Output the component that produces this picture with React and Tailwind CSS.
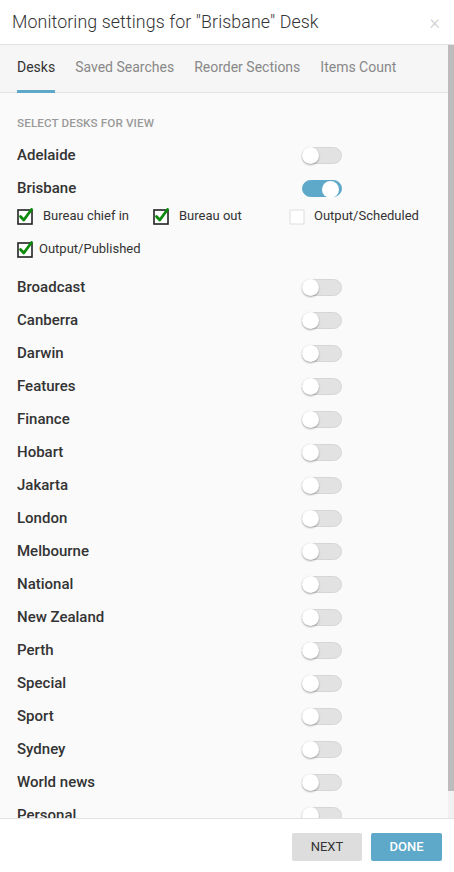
import { useState } from 'react';

const desks = [
  'Broadcast', 'Canberra', 'Darwin', 'Features', 'Finance', 'Hobart', 'Jakarta',
  'London', 'Melbourne', 'National', 'New Zealand', 'Perth', 'Special', 'Sport',
  'Sydney', 'World news', 'Personal'
];

const Toggle = ({ on }) => (
  <div
    className={`relative w-[40px] h-[17px] rounded-full border ${
      on ? 'bg-[#5ea9c9] border-[#5ea9c9]' : 'bg-[#e2e2e2] border-[#d6d6d6]'
    }`}
  >
    <div
      className={`absolute top-[-1px] w-[17px] h-[17px] rounded-full bg-white shadow-[0_1px_2px_rgba(0,0,0,0.35)] ${
        on ? 'right-[2px] top-[0px] w-[15px] h-[15px] shadow-none' : 'left-[-1px]'
      }`}
    />
  </div>
);

const Check = ({ checked }) => (
  <svg width="18" height="18" viewBox="0 0 18 18" className="shrink-0">
    <rect x="1" y="3" width="14" height="14" fill="white" stroke={checked ? '#222' : '#ddd'} strokeWidth={checked ? 1.6 : 1} />
    {checked && (
      <path d="M3.5 9.5 L6.8 13 L14.5 2.5" fill="none" stroke="#0b8a0b" strokeWidth="2.8" strokeLinecap="round" strokeLinejoin="round" />
    )}
  </svg>
);

const App = () => {
  const [tab] = useState('Desks');
  const tabs = ['Desks', 'Saved Searches', 'Reorder Sections', 'Items Count'];

  return (
    <div className="w-[454px] h-[872px] bg-white flex flex-col overflow-hidden" style={{ fontFamily: 'Roboto, "Liberation Sans", sans-serif' }}>
      <div className="h-[45px] shrink-0 flex items-center justify-between pl-[12px] pr-[14px] border-b border-[#e2e2e2]">
        <h1 className="text-[17.8px] font-light text-[#333] tracking-[0.1px]">Monitoring settings for "Brisbane" Desk</h1>
        <span className="text-[#cfcfcf] text-[20px] leading-none font-light">×</span>
      </div>

      <div className="flex flex-1 min-h-0">
        <div className="flex-1 flex flex-col overflow-hidden bg-[#fafafa]">
          <div className="h-[48px] shrink-0 bg-[#f6f6f6] border-b border-[#e2e2e2] flex pl-[17px] gap-[20px]">
            {tabs.map((t) => (
              <div
                key={t}
                className={`flex items-center text-[14px] border-b-[3px] mb-[-1px] pb-[1px] ${
                  t === tab ? 'text-[#333] border-[#5ea9c9]' : 'text-[#888] border-transparent'
                }`}
              >
                {t}
              </div>
            ))}
          </div>

          <div className="pl-[17px] pt-[22px]">
            <div className="text-[11.7px] leading-4 font-medium uppercase text-[#9a9a9a] mb-[8px] tracking-[0.1px]">Select desks for view</div>

            <div className="flex items-center h-[33px]">
              <span className="w-[285px] shrink-0 text-[15px] font-medium text-[#333]">Adelaide</span>
              <Toggle on={false} />
            </div>
            <div className="flex items-center h-[33px]">
              <span className="w-[285px] shrink-0 text-[15px] font-medium text-[#333]">Brisbane</span>
              <Toggle on={true} />
            </div>

            <div className="flex flex-col gap-[11px] mb-[11px]">
              <div className="flex h-[22px] items-center text-[13px] text-[#333]">
                <div className="w-[136px] flex items-center gap-[8px]"><Check checked /> <span>Bureau chief in</span></div>
                <div className="w-[136px] flex items-center gap-[8px]"><Check checked /> <span>Bureau out</span></div>
                <div className="flex items-center gap-[7px]"><Check checked={false} /> <span>Output/Scheduled</span></div>
              </div>
              <div className="flex h-[22px] items-center text-[13px] text-[#333] gap-[4px]">
                <Check checked /> <span>Output/Published</span>
              </div>
            </div>

            {desks.map((d) => (
              <div key={d} className="flex items-center h-[33px]">
                <span className="w-[285px] shrink-0 text-[15px] font-medium text-[#333]">{d}</span>
                <Toggle on={false} />
              </div>
            ))}
          </div>
        </div>

        <div className="w-[6px] shrink-0 flex flex-col bg-[#f1f1f1]">
          <div className="h-[746px] bg-[#bcbcbc]" />
        </div>
      </div>

      <div className="h-[54px] shrink-0 border-t border-[#e2e2e2] flex justify-end items-start pt-[14px] pr-[12px] gap-[9px]">
        <button className="w-[70px] h-[28px] bg-[#dddddd] text-[#333] text-[13px] rounded-[2px]">NEXT</button>
        <button className="w-[71px] h-[28px] bg-[#5ea9c9] text-white text-[13px] font-medium rounded-[2px]">DONE</button>
      </div>
    </div>
  );
};

export default App;
